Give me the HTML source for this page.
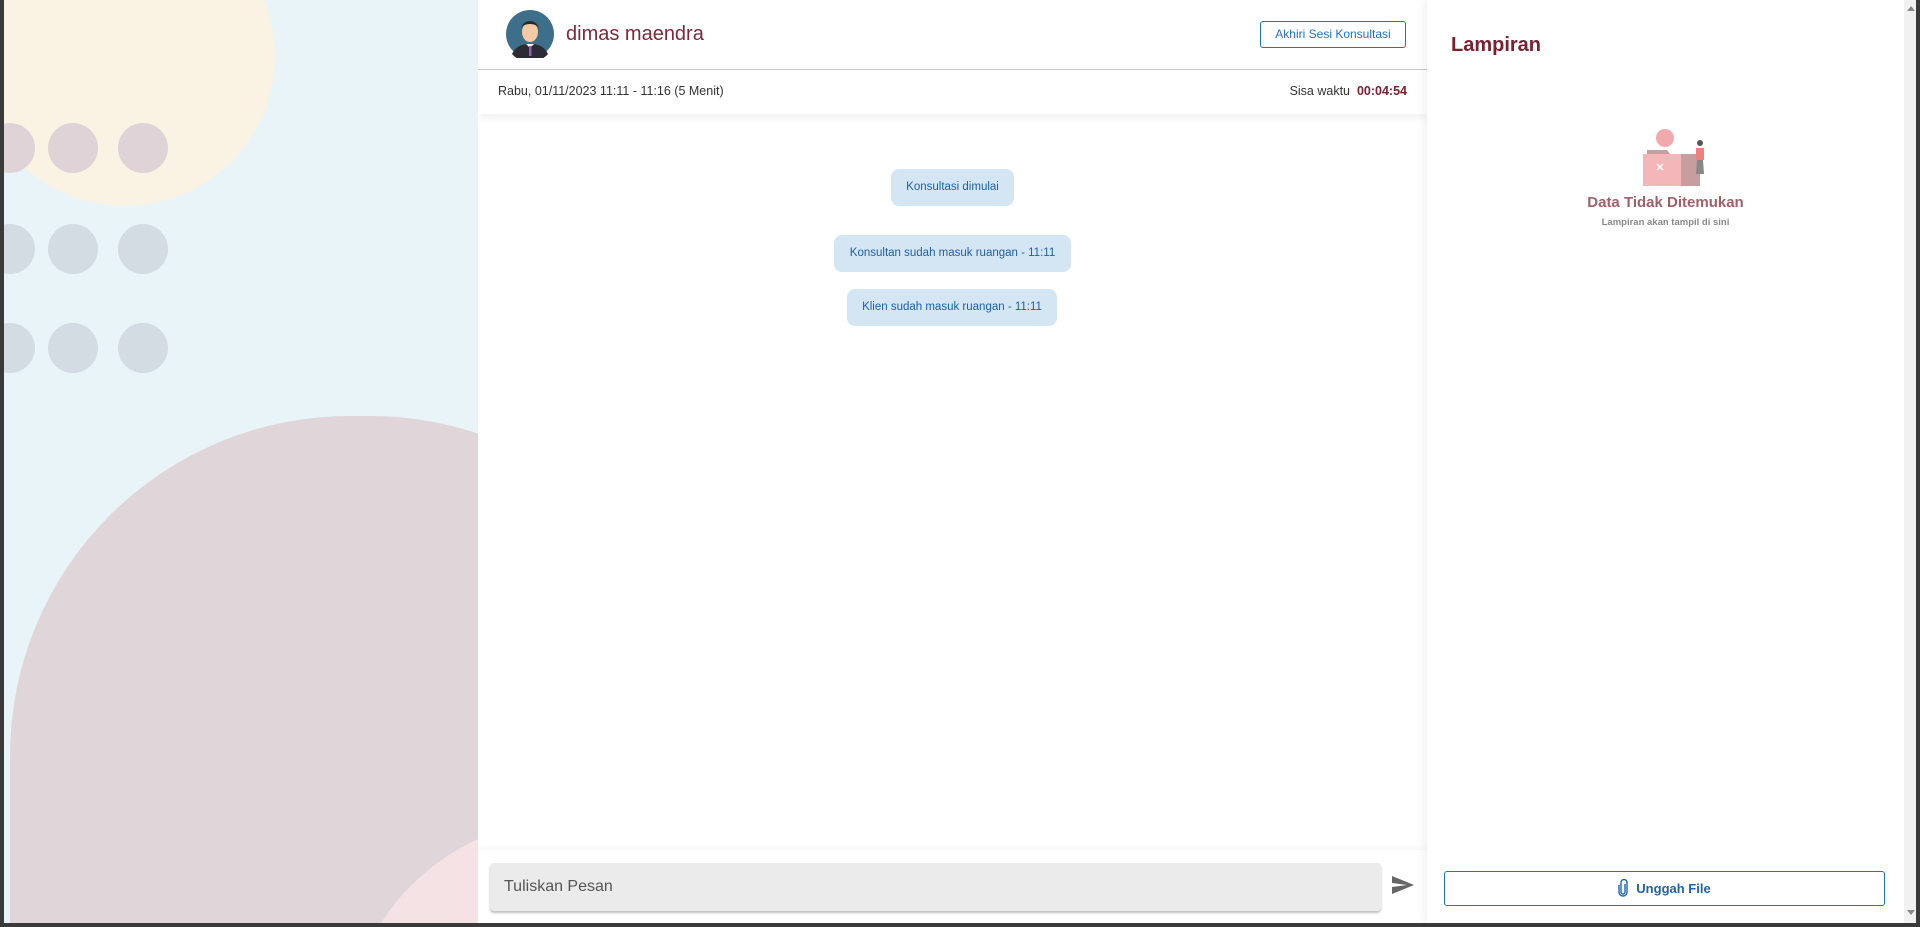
<!DOCTYPE html>
<html><head><meta charset="utf-8"><style>
*{box-sizing:border-box;margin:0;padding:0}
html,body{width:1920px;height:927px;overflow:hidden}
body{background:#3a3a3a;font-family:"Liberation Sans",sans-serif;position:relative}
.left{position:absolute;left:4px;top:0;width:474px;height:923px;background:#e8f4f8;overflow:hidden}
.c{position:absolute;border-radius:50%}
.chat{position:absolute;left:478px;top:0;width:949px;height:923px;background:#fff;overflow:hidden}
.hdr{height:70px;border-bottom:1px solid #c9c9d0;position:relative}
.sub{height:44px;position:relative;box-shadow:0 4px 8px rgba(0,0,0,.06)}
.b{position:absolute;background:#d4e6f4;color:#1e5fa8;font-size:11.5px;border-radius:8px;height:37px;line-height:37px;text-align:center}
.right{position:absolute;left:1427px;top:0;width:477px;height:923px;background:#fff;box-shadow:-3px 0 8px rgba(0,0,0,.06);overflow:hidden}
.sb{position:absolute;left:1904px;top:0;width:12px;height:923px;background:#f1f1f1}
</style></head><body>
<div class="left">
 <div class="c" style="left:-29px;top:-94px;width:300px;height:300px;background:#faf2e2"></div>
 <div class="c" style="left:-19px;top:123px;width:50px;height:50px;background:#e0d3d8"></div>
 <div class="c" style="left:44px;top:123px;width:50px;height:50px;background:#e0d3d8"></div>
 <div class="c" style="left:114px;top:123px;width:50px;height:50px;background:#e0d3d8"></div>
 <div class="c" style="left:-19px;top:224px;width:50px;height:50px;background:#d3dbe3"></div>
 <div class="c" style="left:44px;top:224px;width:50px;height:50px;background:#d3dbe3"></div>
 <div class="c" style="left:114px;top:224px;width:50px;height:50px;background:#d3dbe3"></div>
 <div class="c" style="left:-19px;top:323px;width:50px;height:50px;background:#d3dbe3"></div>
 <div class="c" style="left:44px;top:323px;width:50px;height:50px;background:#d3dbe3"></div>
 <div class="c" style="left:114px;top:323px;width:50px;height:50px;background:#d3dbe3"></div>
 <div style="position:absolute;left:6px;top:416px;width:700px;height:900px;border-radius:340px 340px 0 0;background:#e0d6d9"></div>
 <div class="c" style="left:340px;top:818px;width:460px;height:460px;background:#f5e2e5"></div>
</div>
<div class="chat">
 <div class="hdr">
  <svg style="position:absolute;left:28px;top:10px" width="48" height="48" viewBox="0 0 48 48"><circle cx="24" cy="24" r="24" fill="#3e6f8a"/><path d="M6 44c4-8 10-10 18-10s14 2 18 10a24 24 0 0 1-36 0z" fill="#2c2c34"/><path d="M20 34l4 4 4-4z" fill="#fff"/><rect x="23" y="36" width="2.5" height="10" fill="#9b59b6"/><ellipse cx="24" cy="22" rx="8" ry="10" fill="#f4c9a6"/><path d="M15 20c0-8 18-8 18 0 0-4-3-9-9-9s-9 5-9 9z" fill="#2a2a2a"/></svg>
  <div style="position:absolute;left:88px;top:23px;font-size:20px;color:#7a2a3a">dimas maendra</div>
  <div style="position:absolute;left:782px;top:21px;width:146px;height:27px;border:1px solid #1e73c8;border-radius:3px;color:#1e73c8;font-size:12px;line-height:25px;text-align:center">Akhiri Sesi Konsultasi</div>
 </div>
 <div class="sub">
  <div style="position:absolute;left:20px;top:14px;font-size:12.5px;color:#333">Rabu, 01/11/2023 11:11 - 11:16 (5 Menit)</div>
  <div style="position:absolute;right:20px;top:14px;font-size:12.5px;color:#333">Sisa waktu &nbsp;<b style="color:#7a2030">00:04:54</b></div>
 </div>
 <div class="b" style="left:413px;top:169px;width:123px">Konsultasi dimulai</div>
 <div class="b" style="left:356px;top:235px;width:237px">Konsultan sudah masuk ruangan - 11:11</div>
 <div class="b" style="left:369px;top:289px;width:210px">Klien sudah masuk ruangan - 11:11</div>
 <div style="position:absolute;left:0;top:850px;width:949px;height:73px;background:#fff;box-shadow:0 -2px 6px rgba(0,0,0,.04)"></div>
 <div style="position:absolute;left:12px;top:863px;width:891px;height:48px;background:#ebebeb;border-radius:4px;box-shadow:0 2px 2px rgba(0,0,0,.25);padding-left:14px;line-height:48px;font-size:16px;color:#555">Tuliskan Pesan</div>
 <svg style="position:absolute;left:913px;top:875px" width="24" height="20" viewBox="0 0 24 20"><path d="M1 1l22 9-22 9 0-7 15-2-15-2z" fill="#666"/></svg>
</div>
<div class="right">
 <div style="position:absolute;left:24px;top:34px;font-size:20px;font-weight:bold;color:#7a2030">Lampiran</div>
 <svg style="position:absolute;left:208px;top:128px" width="76" height="60" viewBox="0 0 76 60"><circle cx="30" cy="10" r="9" fill="#f2a9ad"/><path d="M12 22h20l3 4h30v32H12z" fill="#c79ea0"/><path d="M8 26h38v32H8z" fill="#f5b6ba"/><path d="M22 36l6 6m0-6l-6 6" stroke="#fff" stroke-width="1.5"/><circle cx="65" cy="15" r="3" fill="#555"/><path d="M61 20h8v12h-8z" fill="#f08080"/><path d="M62 32h6l1 14h-8z" fill="#888"/></svg>
 <div style="position:absolute;left:0;width:477px;top:194px;text-align:center;font-size:15px;font-weight:bold;color:#a0606a">Data Tidak Ditemukan</div>
 <div style="position:absolute;left:0;width:477px;top:217px;text-align:center;font-size:9.5px;font-weight:bold;color:#888">Lampiran akan tampil di sini</div>
 <div style="position:absolute;left:17px;top:871px;width:441px;height:35px;border:1px solid #1e73c8;border-radius:3px;color:#1e63b0;font-size:13px;font-weight:bold;line-height:33px;text-align:center"><svg width="10" height="18" viewBox="0 0 10 18" style="vertical-align:-4px;margin-right:8px"><path d="M7 5v8a2 2 0 0 1-4 0V3.5a3 3 0 0 1 6 0V13a4 4 0 0 1-8 0V6" fill="none" stroke="#1e63b0" stroke-width="1.4"/></svg>Unggah File</div>
</div>
<div class="sb"><div style="position:absolute;left:3px;top:6px;border:4px solid transparent;border-bottom:5px solid #888;border-top:0"></div><div style="position:absolute;left:3px;top:910px;border:4px solid transparent;border-top:5px solid #888;border-bottom:0"></div></div>
</body></html>
